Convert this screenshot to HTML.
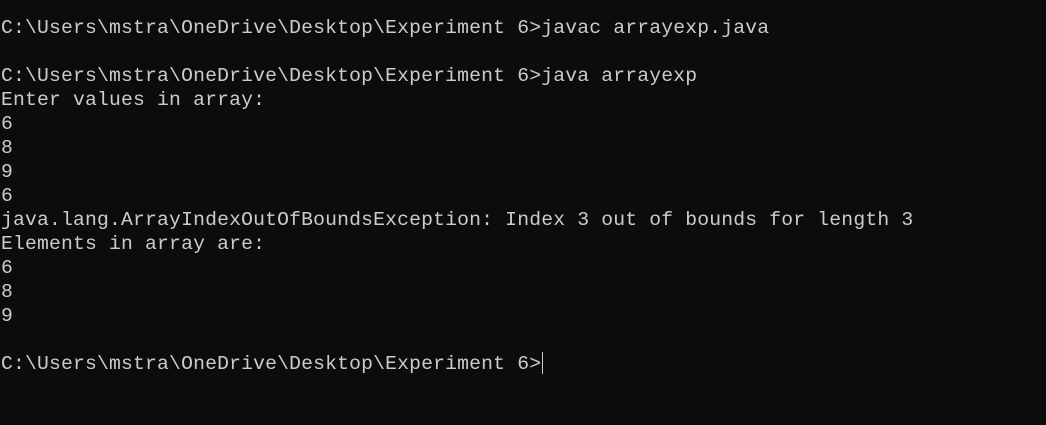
<!DOCTYPE html>
<html><head><meta charset="utf-8"><style>
html,body{margin:0;padding:0;background:#0c0c0c;width:1046px;height:425px;overflow:hidden}
pre{margin:0;position:absolute;left:1px;top:16px;font-family:"Liberation Mono",monospace;font-size:19.7px;letter-spacing:0.19px;line-height:24px;color:#cccccc;white-space:pre}
.cur{display:inline-block;width:1px;height:22px;background:#cccccc;vertical-align:-5px;margin-left:1px}
</style></head><body><pre>C:\Users\mstra\OneDrive\Desktop\Experiment 6&gt;javac arrayexp.java

C:\Users\mstra\OneDrive\Desktop\Experiment 6&gt;java arrayexp
Enter values in array:
6
8
9
6
java.lang.ArrayIndexOutOfBoundsException: Index 3 out of bounds for length 3
Elements in array are:
6
8
9

C:\Users\mstra\OneDrive\Desktop\Experiment 6&gt;<span class="cur"></span></pre></body></html>
